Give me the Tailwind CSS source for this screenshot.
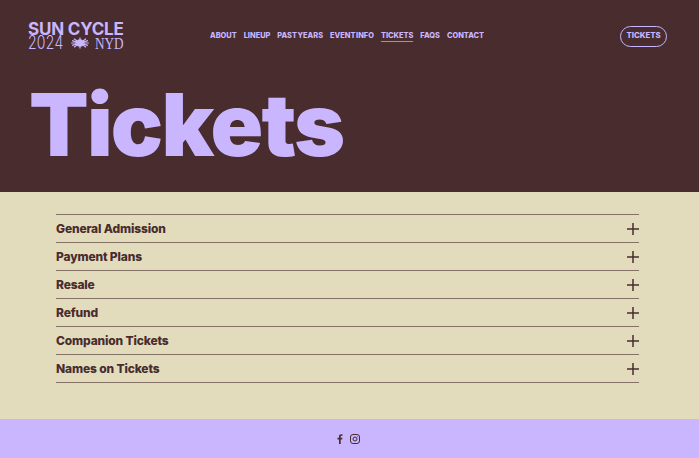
<!DOCTYPE html>
<html lang="en">
<head>
    <meta charset="UTF-8">
    <meta name="viewport" content="width=device-width, initial-scale=1.0">
    <title>Tickets</title>
    <script src="https://cdn.jsdelivr.net/npm/@tailwindcss/browser@4"></script>
</head>
<body class="bg-[#e2dcbc] font-['Inter',sans-serif] overflow-hidden">
    <header class="bg-[#482c2e] h-[192px] text-[#c9b6fe]">
        <div class="flex items-center h-[72px] pl-[28px] pr-[32px]">
            <a class="w-[182px] shrink-0 block">
                <div class="text-[17px] leading-[14px] font-bold tracking-[-0.2px] whitespace-nowrap">SUN CYCLE</div>
                <div class="flex items-center h-[14px] leading-[14px] font-light whitespace-nowrap">
                    <span class="inline-block w-[37px] text-[18px] origin-left scale-x-[0.78] tracking-[0.3px]">2024</span>
                    <svg class="w-[20px] h-[14px] ml-[5px]" viewBox="0 0 21 15" fill="currentColor">
                        <circle cx="10.5" cy="7.5" r="4"/>
                        <path d="M1 7.5H20M10.5 1.5V13.5M4 3L17 12M17 3L4 12M2 5L19 10M19 5L2 10" stroke="currentColor" stroke-width="1.3"/>
                    </svg>
                    <span class="inline-block w-[28px] ml-[5px] font-['Liberation_Serif',serif] font-normal text-[15px] origin-left scale-x-[0.88] scale-y-[1.1]">NYD</span>
                </div>
            </a>
            <nav class="flex gap-[7px] text-[7.4px] font-extrabold leading-[11px] [word-spacing:-1px] whitespace-nowrap">
                <a>ABOUT</a>
                <a>LINEUP</a>
                <a>PAST YEARS</a>
                <a>EVENT INFO</a>
                <a class="border-b border-[#c9b6fe]/70">TICKETS</a>
                <a>FAQS</a>
                <a>CONTACT</a>
            </nav>
            <a class="ml-auto w-[47px] h-[21px] flex items-center justify-center rounded-full border border-[#c9b6fe] text-[7.8px] font-extrabold">TICKETS</a>
        </div>
        <h1 class="pl-[29px] text-[87px] leading-[105px] font-black tracking-[-1.8px]">Tickets</h1>
    </header>
    <main class="h-[227px] px-[56px] pt-[22px] pr-[60px]">
        <div class="border-t border-[#482c2e]/60 text-[#482c2e]">
            <div class="flex items-center justify-between h-[28px] pt-[1px] border-b border-[#482c2e]/60 text-[12px] font-extrabold tracking-[-0.15px]">
                <span>General Admission</span>
                <svg class="w-[12px] h-[12px]" viewBox="0 0 12 12" stroke="currentColor" stroke-width="1.5"><path d="M0 6H12M6 0V12"/></svg>
            </div>
            <div class="flex items-center justify-between h-[28px] pt-[1px] border-b border-[#482c2e]/60 text-[12px] font-extrabold tracking-[-0.15px]">
                <span>Payment Plans</span>
                <svg class="w-[12px] h-[12px]" viewBox="0 0 12 12" stroke="currentColor" stroke-width="1.5"><path d="M0 6H12M6 0V12"/></svg>
            </div>
            <div class="flex items-center justify-between h-[28px] pt-[1px] border-b border-[#482c2e]/60 text-[12px] font-extrabold tracking-[-0.15px]">
                <span>Resale</span>
                <svg class="w-[12px] h-[12px]" viewBox="0 0 12 12" stroke="currentColor" stroke-width="1.5"><path d="M0 6H12M6 0V12"/></svg>
            </div>
            <div class="flex items-center justify-between h-[28px] pt-[1px] border-b border-[#482c2e]/60 text-[12px] font-extrabold tracking-[-0.15px]">
                <span>Refund</span>
                <svg class="w-[12px] h-[12px]" viewBox="0 0 12 12" stroke="currentColor" stroke-width="1.5"><path d="M0 6H12M6 0V12"/></svg>
            </div>
            <div class="flex items-center justify-between h-[28px] pt-[1px] border-b border-[#482c2e]/60 text-[12px] font-extrabold tracking-[-0.15px]">
                <span>Companion Tickets</span>
                <svg class="w-[12px] h-[12px]" viewBox="0 0 12 12" stroke="currentColor" stroke-width="1.5"><path d="M0 6H12M6 0V12"/></svg>
            </div>
            <div class="flex items-center justify-between h-[28px] pt-[1px] border-b border-[#482c2e]/60 text-[12px] font-extrabold tracking-[-0.15px]">
                <span>Names on Tickets</span>
                <svg class="w-[12px] h-[12px]" viewBox="0 0 12 12" stroke="currentColor" stroke-width="1.5"><path d="M0 6H12M6 0V12"/></svg>
            </div>
        </div>
    </main>
    <footer class="bg-[#c9b6fe] h-[39px] flex items-center justify-center gap-[6px] pr-[3px] text-[#482c2e]">
        <svg class="w-[8px] h-[10px]" viewBox="0 0 8 10" fill="currentColor"><path d="M3 10V5.500H1.500V3.800H3V2.600C3 1 3.900.2 5.200.2c.6 0 1.100 0 1.300.1v1.500h-.9c-.7 0-.9.4-.9.9v1.100h1.700l-.2 1.700H4.700V10z"/></svg>
        <svg class="w-[10px] h-[10px]" viewBox="0 0 10 10" fill="none" stroke="currentColor" stroke-width="1"><rect x=".5" y=".5" width="9" height="9" rx="2.500"/><circle cx="5" cy="5" r="2"/><circle cx="7.500" cy="2.500" r=".4" fill="currentColor" stroke="none"/></svg>
    </footer>
</body>
</html>
